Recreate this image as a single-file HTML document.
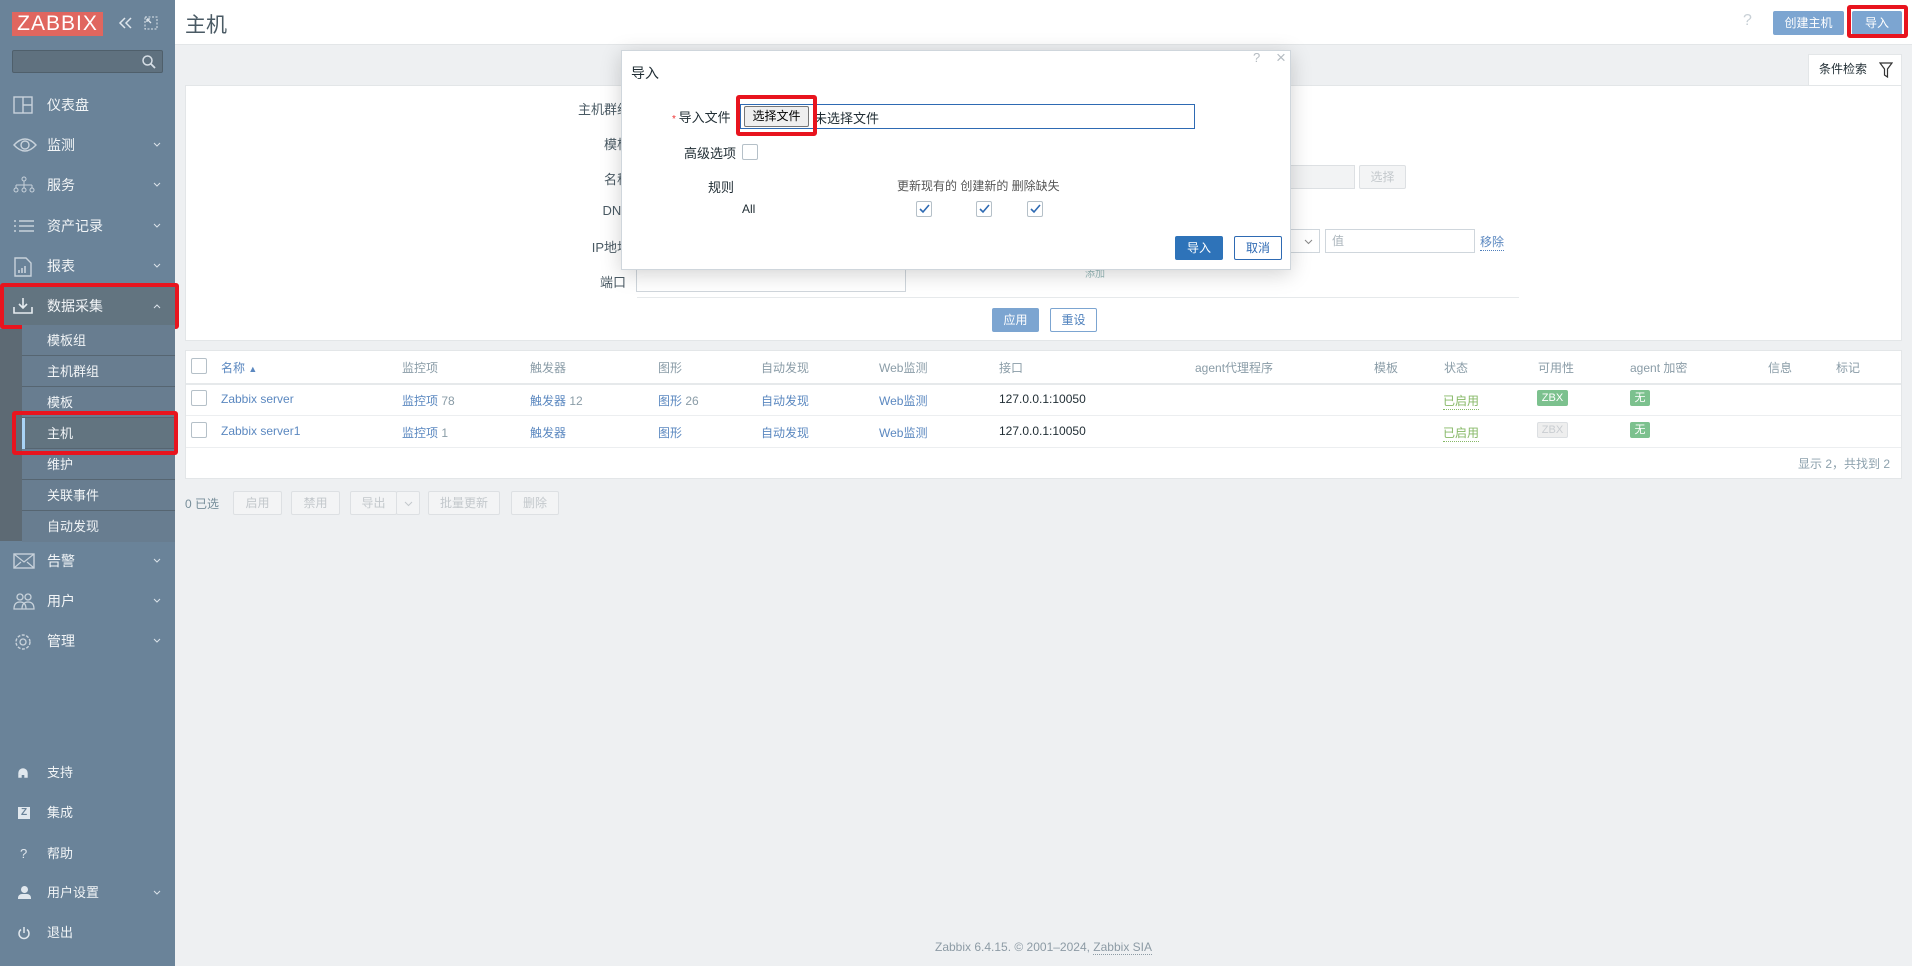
<!DOCTYPE html>
<html><head><meta charset="utf-8">
<style>
*{box-sizing:border-box;margin:0;padding:0}
body{width:1912px;height:966px;position:relative;overflow:hidden;background:#eef0f2;font-family:"Liberation Sans","Noto Sans CJK SC",sans-serif;font-size:13px;color:#1f2c33}
.a{position:absolute}
#side{left:0;top:0;width:175px;height:966px;background:#6a8399}
.logo{left:12px;top:12px;width:91px;height:24px;background:#e0665f;color:#fff;font-size:21px;line-height:24px;text-align:center;letter-spacing:1px}
.srch{left:12px;top:50px;width:151px;height:23px;background:#5f717f;border:1px solid #4f5f6b;border-radius:2px}
.mi{left:0;width:175px;height:40px;color:#f2f5f7;font-size:14px;line-height:40px}
.mi .t{position:absolute;left:47px}
.mi svg.ic{position:absolute;left:13px;top:11px}
.mi svg.ch{position:absolute;left:153px;top:17px}
.sub{left:0;top:329px;width:175px;height:212px;background:#5d6a74}
.si{left:22px;width:153px;height:31px;background:#687d90;border-bottom:1px solid #566571;color:#f2f5f7;font-size:13px;line-height:31px;padding-left:25px}
.red{border:4px solid #e8141e;border-radius:3px}
#hdr{left:175px;top:0;width:1737px;height:45px;background:#fff;border-bottom:1px solid #e3e6e8}
.btn{height:24px;line-height:22px;text-align:center;border-radius:2px;font-size:12px}
.bl{background:#7ca5d1;color:#fff;border:1px solid #7ca5d1}
.bo{background:#fff;color:#4f81bd;border:1px solid #7ca5d1}
.bd{background:#f3f4f5;color:#c3c8cc;border:1px solid #dde0e3}
.lbl{color:#4a5a64;font-size:13px;text-align:right}
.inp{border:1px solid #cfd6dc;background:#fff}
.th{color:#8a9ca7;font-size:12px}
.lk{color:#5b88c0;font-size:12px}
.cb{width:16px;height:16px;border:1px solid #b5c0c8;background:#fff;border-radius:2px}
</style></head><body>

<div id="side" class="a">
 <div class="a logo">ZABBIX</div>
 <svg class="a" style="left:118px;top:16px" width="16" height="14"><path d="M7 2L2 7l5 5M13 2L8 7l5 5" stroke="#dfe6ec" stroke-width="1.5" fill="none"/></svg>
 <svg class="a" style="left:144px;top:16px" width="14" height="14"><rect x="1" y="1" width="12" height="12" stroke="#dfe6ec" stroke-dasharray="2 1.5" fill="none"/><path d="M3 3l4 4M3 3h3M3 3v3" stroke="#dfe6ec" stroke-width="1.3"/></svg>
 <div class="a srch"><svg class="a" style="right:6px;top:4px" width="14" height="14"><circle cx="5.5" cy="5.5" r="4.5" stroke="#d7dfe6" stroke-width="1.5" fill="none"/><line x1="9" y1="9" x2="13" y2="13" stroke="#d7dfe6" stroke-width="1.8"/></svg></div>

 <div class="a mi" style="top:85px"><svg class="ic" width="20" height="18"><rect x="1" y="1" width="18" height="16" stroke="#c8d2db" stroke-width="1.4" fill="none"/><path d="M10 1v16M10 9h9" stroke="#c8d2db" stroke-width="1.4"/></svg><span class="t">仪表盘</span></div>
 <div class="a mi" style="top:125px"><svg class="ic" width="24" height="18"><path d="M1 9Q12 -3 23 9Q12 21 1 9Z" stroke="#c8d2db" stroke-width="1.4" fill="none"/><circle cx="12" cy="9" r="4" stroke="#c8d2db" stroke-width="1.4" fill="none"/></svg><span class="t">监测</span><svg class="ch" width="8" height="6"><path d="M1 1l3 3 3-3" stroke="#dbe3ea" fill="none"/></svg></div>
 <div class="a mi" style="top:165px"><svg class="ic" width="22" height="18"><circle cx="11" cy="3" r="2" stroke="#c8d2db" fill="none"/><path d="M11 5v4M3 9h16M3 9v3M11 9v3M19 9v3" stroke="#c8d2db"/><circle cx="3" cy="14" r="2" stroke="#c8d2db" fill="none"/><circle cx="11" cy="14" r="2" stroke="#c8d2db" fill="none"/><circle cx="19" cy="14" r="2" stroke="#c8d2db" fill="none"/></svg><span class="t">服务</span><svg class="ch" width="8" height="6"><path d="M1 1l3 3 3-3" stroke="#dbe3ea" fill="none"/></svg></div>
 <div class="a mi" style="top:206px"><svg class="ic" width="22" height="18"><path d="M1 4h2M1 9h2M1 14h2M6 4h15M6 9h15M6 14h15" stroke="#c8d2db" stroke-width="1.6"/></svg><span class="t">资产记录</span><svg class="ch" width="8" height="6"><path d="M1 1l3 3 3-3" stroke="#dbe3ea" fill="none"/></svg></div>
 <div class="a mi" style="top:246px"><svg class="ic" width="20" height="20"><path d="M2 1h11l5 5v13H2Z" stroke="#c8d2db" stroke-width="1.4" fill="none"/><path d="M6 16v-3M9 16v-5M12 16v-7" stroke="#c8d2db" stroke-width="1.6"/></svg><span class="t">报表</span><svg class="ch" width="8" height="6"><path d="M1 1l3 3 3-3" stroke="#dbe3ea" fill="none"/></svg></div>

 <div class="a sub"></div>
 <div class="a" style="left:4px;top:287px;width:171px;height:38px;background:#627480"></div>
 <div class="a mi" style="top:286px"><svg class="ic" width="20" height="18"><path d="M1 10v6h18v-6" stroke="#e6ecf0" stroke-width="1.6" fill="none"/><path d="M10 1v10M6 7l4 4 4-4" stroke="#e6ecf0" stroke-width="1.6" fill="none"/></svg><span class="t">数据采集</span><svg class="ch" width="8" height="6"><path d="M1 5l3-3 3 3" stroke="#dbe3ea" fill="none"/></svg></div>
 <div class="a red" style="left:0;top:283px;width:179px;height:46px"></div>

 <div class="a si" style="top:325px">模板组</div>
 <div class="a si" style="top:356px">主机群组</div>
 <div class="a si" style="top:387px">模板</div>
 <div class="a si" style="top:418px;background:#627480"><span class="a" style="left:0;top:0;width:3px;height:31px;background:#a9d3f5"></span>主机</div>
 <div class="a si" style="top:449px">维护</div>
 <div class="a si" style="top:480px">关联事件</div>
 <div class="a si" style="top:511px;border:none">自动发现</div>
 <div class="a red" style="left:12px;top:411px;width:166px;height:44px"></div>

 <div class="a mi" style="top:541px"><svg class="ic" width="22" height="18"><rect x="1" y="2" width="20" height="14" stroke="#c8d2db" stroke-width="1.4" fill="none"/><path d="M1 2l10 8 10-8M1 16l7-6M21 16l-7-6" stroke="#c8d2db" stroke-width="1.2" fill="none"/></svg><span class="t">告警</span><svg class="ch" width="8" height="6"><path d="M1 1l3 3 3-3" stroke="#dbe3ea" fill="none"/></svg></div>
 <div class="a mi" style="top:581px"><svg class="ic" width="22" height="18"><circle cx="7" cy="5" r="3" stroke="#c8d2db" fill="none" stroke-width="1.3"/><circle cx="15" cy="5" r="3" stroke="#c8d2db" fill="none" stroke-width="1.3"/><path d="M1 17q0-7 6-7t6 7ZM9 17q0-7 6-7t6 7Z" stroke="#c8d2db" fill="none" stroke-width="1.3"/></svg><span class="t">用户</span><svg class="ch" width="8" height="6"><path d="M1 1l3 3 3-3" stroke="#dbe3ea" fill="none"/></svg></div>
 <div class="a mi" style="top:621px"><svg class="ic" width="20" height="20"><circle cx="10" cy="10" r="7" stroke="#c8d2db" stroke-width="1.4" fill="none" stroke-dasharray="3 1.5"/><circle cx="10" cy="10" r="3" stroke="#c8d2db" stroke-width="1.3" fill="none"/></svg><span class="t">管理</span><svg class="ch" width="8" height="6"><path d="M1 1l3 3 3-3" stroke="#dbe3ea" fill="none"/></svg></div>

 <div class="a mi" style="top:753px;font-size:13px"><svg class="a" style="left:17px;top:14px" width="12" height="12"><path d="M2 8V6a4 4 0 0 1 8 0v2M2 7v3h2V7ZM10 7v3H8V7Z" stroke="#e1e8ee" stroke-width="1.4" fill="#e1e8ee"/></svg><span class="t">支持</span></div>
 <div class="a mi" style="top:793px;font-size:13px"><span class="a" style="left:18px;top:14px;width:12px;height:12px;background:#e1e8ee;color:#6a8399;font-size:10px;line-height:12px;text-align:center;font-weight:bold">Z</span><span class="t">集成</span></div>
 <div class="a mi" style="top:834px;font-size:13px"><span class="a" style="left:20px;color:#e1e8ee">?</span><span class="t">帮助</span></div>
 <div class="a mi" style="top:873px;font-size:13px"><span class="a" style="left:18px;top:13px;width:13px;height:14px"><span class="a" style="left:3px;top:0;width:7px;height:7px;border-radius:50%;background:#e1e8ee"></span><span class="a" style="left:0;top:8px;width:13px;height:5px;border-radius:4px 4px 0 0;background:#e1e8ee"></span></span><span class="t">用户设置</span><svg class="ch" width="8" height="6"><path d="M1 1l3 3 3-3" stroke="#dbe3ea" fill="none"/></svg></div>
 <div class="a mi" style="top:913px;font-size:13px"><svg class="a" style="left:17px;top:13px" width="14" height="14"><path d="M4 3.5a5 5 0 1 0 6 0" stroke="#e1e8ee" stroke-width="1.5" fill="none"/><path d="M7 1v6" stroke="#e1e8ee" stroke-width="1.5"/></svg><span class="t">退出</span></div>
</div>

<div id="hdr" class="a">
 <div class="a" style="left:10px;top:9px;font-size:21px;color:#4a5a64">主机</div>
 <div class="a" style="left:1568px;top:12px;color:#c8d0d6;font-size:16px">?</div>
 <div class="a btn bl" style="left:1598px;top:11px;width:71px">创建主机</div>
 <div class="a btn bl" style="left:1677px;top:11px;width:50px">导入</div>
 <div class="a red" style="left:1672px;top:5px;width:61px;height:33px"></div>
</div>

<div class="a" style="left:1808px;top:54px;width:94px;height:32px;background:#fff;border:1px solid #e3e6e8;border-bottom:none;font-size:12px;line-height:28px;padding-left:10px">条件检索<svg class="a" style="left:70px;top:7px" width="14" height="16"><path d="M1 1h12L8.5 7v8l-3-2V7Z" stroke="#333" stroke-width="1.2" fill="none"/></svg></div>
<div class="a" style="left:185px;top:85px;width:1717px;height:256px;background:#fff;border:1px solid #e3e6e8">
 <div class="a" style="left:451px;top:211px;width:882px;height:1px;background:#e6e9eb"></div>
 <div class="a btn bl" style="left:806px;top:222px;width:47px">应用</div>
 <div class="a btn bo" style="left:864px;top:222px;width:47px">重设</div>
</div>
<div class="a lbl" style="left:540px;top:99px;width:90px">主机群组</div>
<div class="a lbl" style="left:540px;top:134px;width:90px">模板</div>
<div class="a lbl" style="left:540px;top:169px;width:90px">名称</div>
<div class="a lbl" style="left:540px;top:203px;width:90px">DNS</div>
<div class="a lbl" style="left:540px;top:237px;width:90px">IP地址</div>
<div class="a lbl" style="left:540px;top:272px;width:86px">端口</div>
<div class="a inp" style="left:636px;top:267px;width:270px;height:25px"></div>
<div class="a" style="left:1285px;top:165px;width:70px;height:24px;background:#f2f3f4;border:1px solid #dde0e3"></div>
<div class="a btn bd" style="left:1359px;top:165px;width:47px">选择</div>
<div class="a inp" style="left:1280px;top:229px;width:40px;height:24px"><svg class="a" style="right:6px;top:9px" width="9" height="6"><path d="M1 1l3.5 3.5L8 1" stroke="#888" fill="none"/></svg></div>
<div class="a inp" style="left:1325px;top:229px;width:150px;height:24px;color:#aab4bb;font-size:12px;line-height:22px;padding-left:6px">值</div>
<div class="a lk" style="left:1480px;top:233px;border-bottom:1px dotted #4f7fbc">移除</div>
<div class="a lk" style="left:1085px;top:265px;font-size:10px;color:#9bb">添加</div>

<div class="a" style="left:185px;top:350px;width:1717px;height:129px;background:#fff;border:1px solid #e3e6e8">
 <div class="a" style="left:0;top:32px;width:1715px;height:2px;background:#e6e9eb"></div>
 <div class="a" style="left:0;top:64px;width:1715px;height:1px;background:#eceef0"></div>
 <div class="a" style="left:0;top:96px;width:1715px;height:1px;background:#eceef0"></div>
</div>
<div class="a cb" style="left:191px;top:358px"></div>
<div class="a cb" style="left:191px;top:390px"></div>
<div class="a cb" style="left:191px;top:422px"></div>
<div class="a th" style="left:221px;top:359px;color:#5b88c0">名称 <span style="font-size:9px">▲</span></div>
<div class="a th" style="left:402px;top:359px">监控项</div>
<div class="a th" style="left:530px;top:359px">触发器</div>
<div class="a th" style="left:658px;top:359px">图形</div>
<div class="a th" style="left:761px;top:359px">自动发现</div>
<div class="a th" style="left:879px;top:359px">Web监测</div>
<div class="a th" style="left:999px;top:359px">接口</div>
<div class="a th" style="left:1195px;top:359px">agent代理程序</div>
<div class="a th" style="left:1374px;top:359px">模板</div>
<div class="a th" style="left:1444px;top:359px">状态</div>
<div class="a th" style="left:1538px;top:359px">可用性</div>
<div class="a th" style="left:1630px;top:359px">agent 加密</div>
<div class="a th" style="left:1768px;top:359px">信息</div>
<div class="a th" style="left:1836px;top:359px">标记</div>

<div class="a lk" style="left:221px;top:392px">Zabbix server</div>
<div class="a lk" style="left:402px;top:392px">监控项 <span style="color:#8a9ca7">78</span></div>
<div class="a lk" style="left:530px;top:392px">触发器 <span style="color:#8a9ca7">12</span></div>
<div class="a lk" style="left:658px;top:392px">图形 <span style="color:#8a9ca7">26</span></div>
<div class="a lk" style="left:761px;top:392px">自动发现</div>
<div class="a lk" style="left:879px;top:392px">Web监测</div>
<div class="a" style="left:999px;top:392px;font-size:12px">127.0.0.1:10050</div>
<div class="a" style="left:1443px;top:392px;font-size:12px;color:#86b866;border-bottom:1px dotted #86b866">已启用</div>
<div class="a" style="left:1537px;top:390px;width:31px;height:16px;background:#7cc18e;color:#fff;font-size:11px;line-height:16px;text-align:center;border-radius:2px">ZBX</div>
<div class="a" style="left:1630px;top:390px;width:20px;height:16px;background:#7cc18e;color:#fff;font-size:11px;line-height:16px;text-align:center;border-radius:2px">无</div>

<div class="a lk" style="left:221px;top:424px">Zabbix server1</div>
<div class="a lk" style="left:402px;top:424px">监控项 <span style="color:#8a9ca7">1</span></div>
<div class="a lk" style="left:530px;top:424px">触发器</div>
<div class="a lk" style="left:658px;top:424px">图形</div>
<div class="a lk" style="left:761px;top:424px">自动发现</div>
<div class="a lk" style="left:879px;top:424px">Web监测</div>
<div class="a" style="left:999px;top:424px;font-size:12px">127.0.0.1:10050</div>
<div class="a" style="left:1443px;top:424px;font-size:12px;color:#86b866;border-bottom:1px dotted #86b866">已启用</div>
<div class="a" style="left:1537px;top:422px;width:31px;height:16px;background:#eee;border:1px solid #dcdfe2;color:#c9cdd1;font-size:11px;line-height:14px;text-align:center;border-radius:2px">ZBX</div>
<div class="a" style="left:1630px;top:422px;width:20px;height:16px;background:#7cc18e;color:#fff;font-size:11px;line-height:16px;text-align:center;border-radius:2px">无</div>
<div class="a" style="left:1798px;top:455px;color:#8da1ad;font-size:12px">显示 2，共找到 2</div>

<div class="a" style="left:185px;top:495px;color:#768d99;font-size:12px">0 已选</div>
<div class="a btn bd" style="left:233px;top:491px;width:49px">启用</div>
<div class="a btn bd" style="left:291px;top:491px;width:49px">禁用</div>
<div class="a btn bd" style="left:350px;top:491px;width:47px">导出</div>
<div class="a btn bd" style="left:396px;top:491px;width:24px"><svg style="margin-top:8px" width="9" height="6"><path d="M1 1l3.5 3.5L8 1" stroke="#c3c8cc" fill="none"/></svg></div>
<div class="a btn bd" style="left:428px;top:491px;width:72px">批量更新</div>
<div class="a btn bd" style="left:511px;top:491px;width:48px">删除</div>

<div class="a" style="left:935px;top:940px;color:#8d9ba5;font-size:12px">Zabbix 6.4.15. © 2001–2024, <span style="border-bottom:1px dotted #8d9ba5">Zabbix SIA</span></div>

<div class="a" style="left:621px;top:50px;width:670px;height:220px;background:#fff;border:1px solid #cfd6dc;box-shadow:0 4px 20px rgba(0,0,0,.18)">
 <div class="a" style="left:9px;top:12px;font-size:14px">导入</div>
 <div class="a" style="left:631px;top:-1px;color:#b5bcc2;font-size:13px">?</div>
 <div class="a" style="left:654px;top:-3px;color:#b5bcc2;font-size:17px">×</div>
 <div class="a" style="left:50px;top:56px;font-size:13px"><span style="color:#e33;font-size:10px">* </span>导入文件</div>
 <div class="a" style="left:118px;top:53px;width:455px;height:25px;border:1px solid #2e6ab3"></div>
 <div class="a" style="left:122px;top:55px;width:65px;height:21px;background:#efefef;border:1px solid #767676;border-radius:2px;font-size:12px;line-height:19px;text-align:center;color:#000">选择文件</div>
 <div class="a" style="left:192px;top:57px;font-size:13px">未选择文件</div>
 <div class="a red" style="left:114px;top:44px;width:81px;height:41px"></div>
 <div class="a" style="left:62px;top:92px;font-size:13px">高级选项</div>
 <div class="a cb" style="left:120px;top:93px"></div>
 <div class="a" style="left:86px;top:126px;font-size:13px">规则</div>
 <div class="a" style="left:275px;top:126px;font-size:12px;color:#555">更新现有的 创建新的 删除缺失</div>
 <div class="a" style="left:120px;top:151px;font-size:12px">All</div>
 <div class="a cb" style="left:294px;top:150px"><svg class="a" style="left:2px;top:2px" width="11" height="10"><path d="M1 5l3 3 6-7" stroke="#2e6ab3" stroke-width="1.6" fill="none"/></svg></div>
 <div class="a cb" style="left:354px;top:150px"><svg class="a" style="left:2px;top:2px" width="11" height="10"><path d="M1 5l3 3 6-7" stroke="#2e6ab3" stroke-width="1.6" fill="none"/></svg></div>
 <div class="a cb" style="left:405px;top:150px"><svg class="a" style="left:2px;top:2px" width="11" height="10"><path d="M1 5l3 3 6-7" stroke="#2e6ab3" stroke-width="1.6" fill="none"/></svg></div>
 <div class="a btn" style="left:553px;top:185px;width:48px;background:#2e73b9;color:#fff;border:1px solid #2e73b9">导入</div>
 <div class="a btn" style="left:612px;top:185px;width:48px;background:#fff;color:#2e6ab3;border:1px solid #2e6ab3">取消</div>
</div>

</body></html>
